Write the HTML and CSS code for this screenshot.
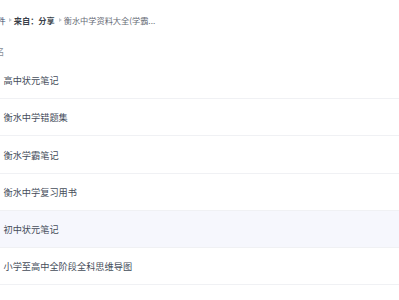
FILE: index.html
```html
<!DOCTYPE html>
<html lang="zh-CN">
<head>
<meta charset="utf-8">
<link rel="stylesheet" href="styles.css">
</head>
<body>
<div class="page">
  <div class="crumbs">
    <span class="crumb-root">全部文件</span>
    <span class="sep"></span>
    <span class="crumb-from">来自：分享</span>
    <span class="sep"></span>
    <span class="crumb-cur">衡水中学资料大全(学霸...</span>
  </div>
  <div class="head"><span class="head-name">文件名</span></div>
  <ul class="list">
    <li class="row"><span class="name">高中状元笔记</span></li>
    <li class="row"><span class="name">衡水中学错题集</span></li>
    <li class="row row-tall"><span class="name">衡水学霸笔记</span></li>
    <li class="row"><span class="name">衡水中学复习用书</span></li>
    <li class="row row-hover"><span class="name">初中状元笔记</span></li>
    <li class="row"><span class="name">小学至高中全阶段全科思维导图</span></li>
  </ul>
</div>
</body>
</html>
```

FILE: styles.css
```css
html, body {
  margin: 0;
  padding: 0;
  background: #ffffff;
}
body {
  font-family: "Noto Sans CJK SC", "Noto Sans", sans-serif;
  font-size: 9.2px;
  color: #454d5a;
  overflow: hidden;
}
.page {
  width: 399px;
}
.crumbs {
  height: 40px;
  display: flex;
  align-items: center;
  margin-left: -27px;
  white-space: nowrap;
  font-size: 8.2px;
}
.crumb-root {
  color: #3b4a6e;
}
.sep {
  width: 0;
  height: 0;
  border-top: 2.5px solid transparent;
  border-bottom: 2.5px solid transparent;
  border-left: 3px solid #c4c8d0;
  margin: 0 2px 0 3px;
}
.crumb-from {
  color: #3a3f4a;
  font-weight: bold;
}
.crumb-cur {
  color: #666b75;
}
.crumb-from + .sep {
  margin-left: 4px;
}
.head {
  height: 22px;
  display: flex;
  align-items: center;
  margin-left: -23px;
  color: #8a8f99;
}
.list {
  list-style: none;
  margin: 0;
  padding: 0;
}
.row {
  box-sizing: border-box;
  height: 37px;
  border-bottom: 1px solid #f0f1f4;
  display: flex;
  align-items: center;
  padding-left: 3.5px;
}
.row-tall {
  height: 38px;
}
.row-hover {
  background: #f6f7fd;
}
.name {
  color: #454d5a;
}
```
